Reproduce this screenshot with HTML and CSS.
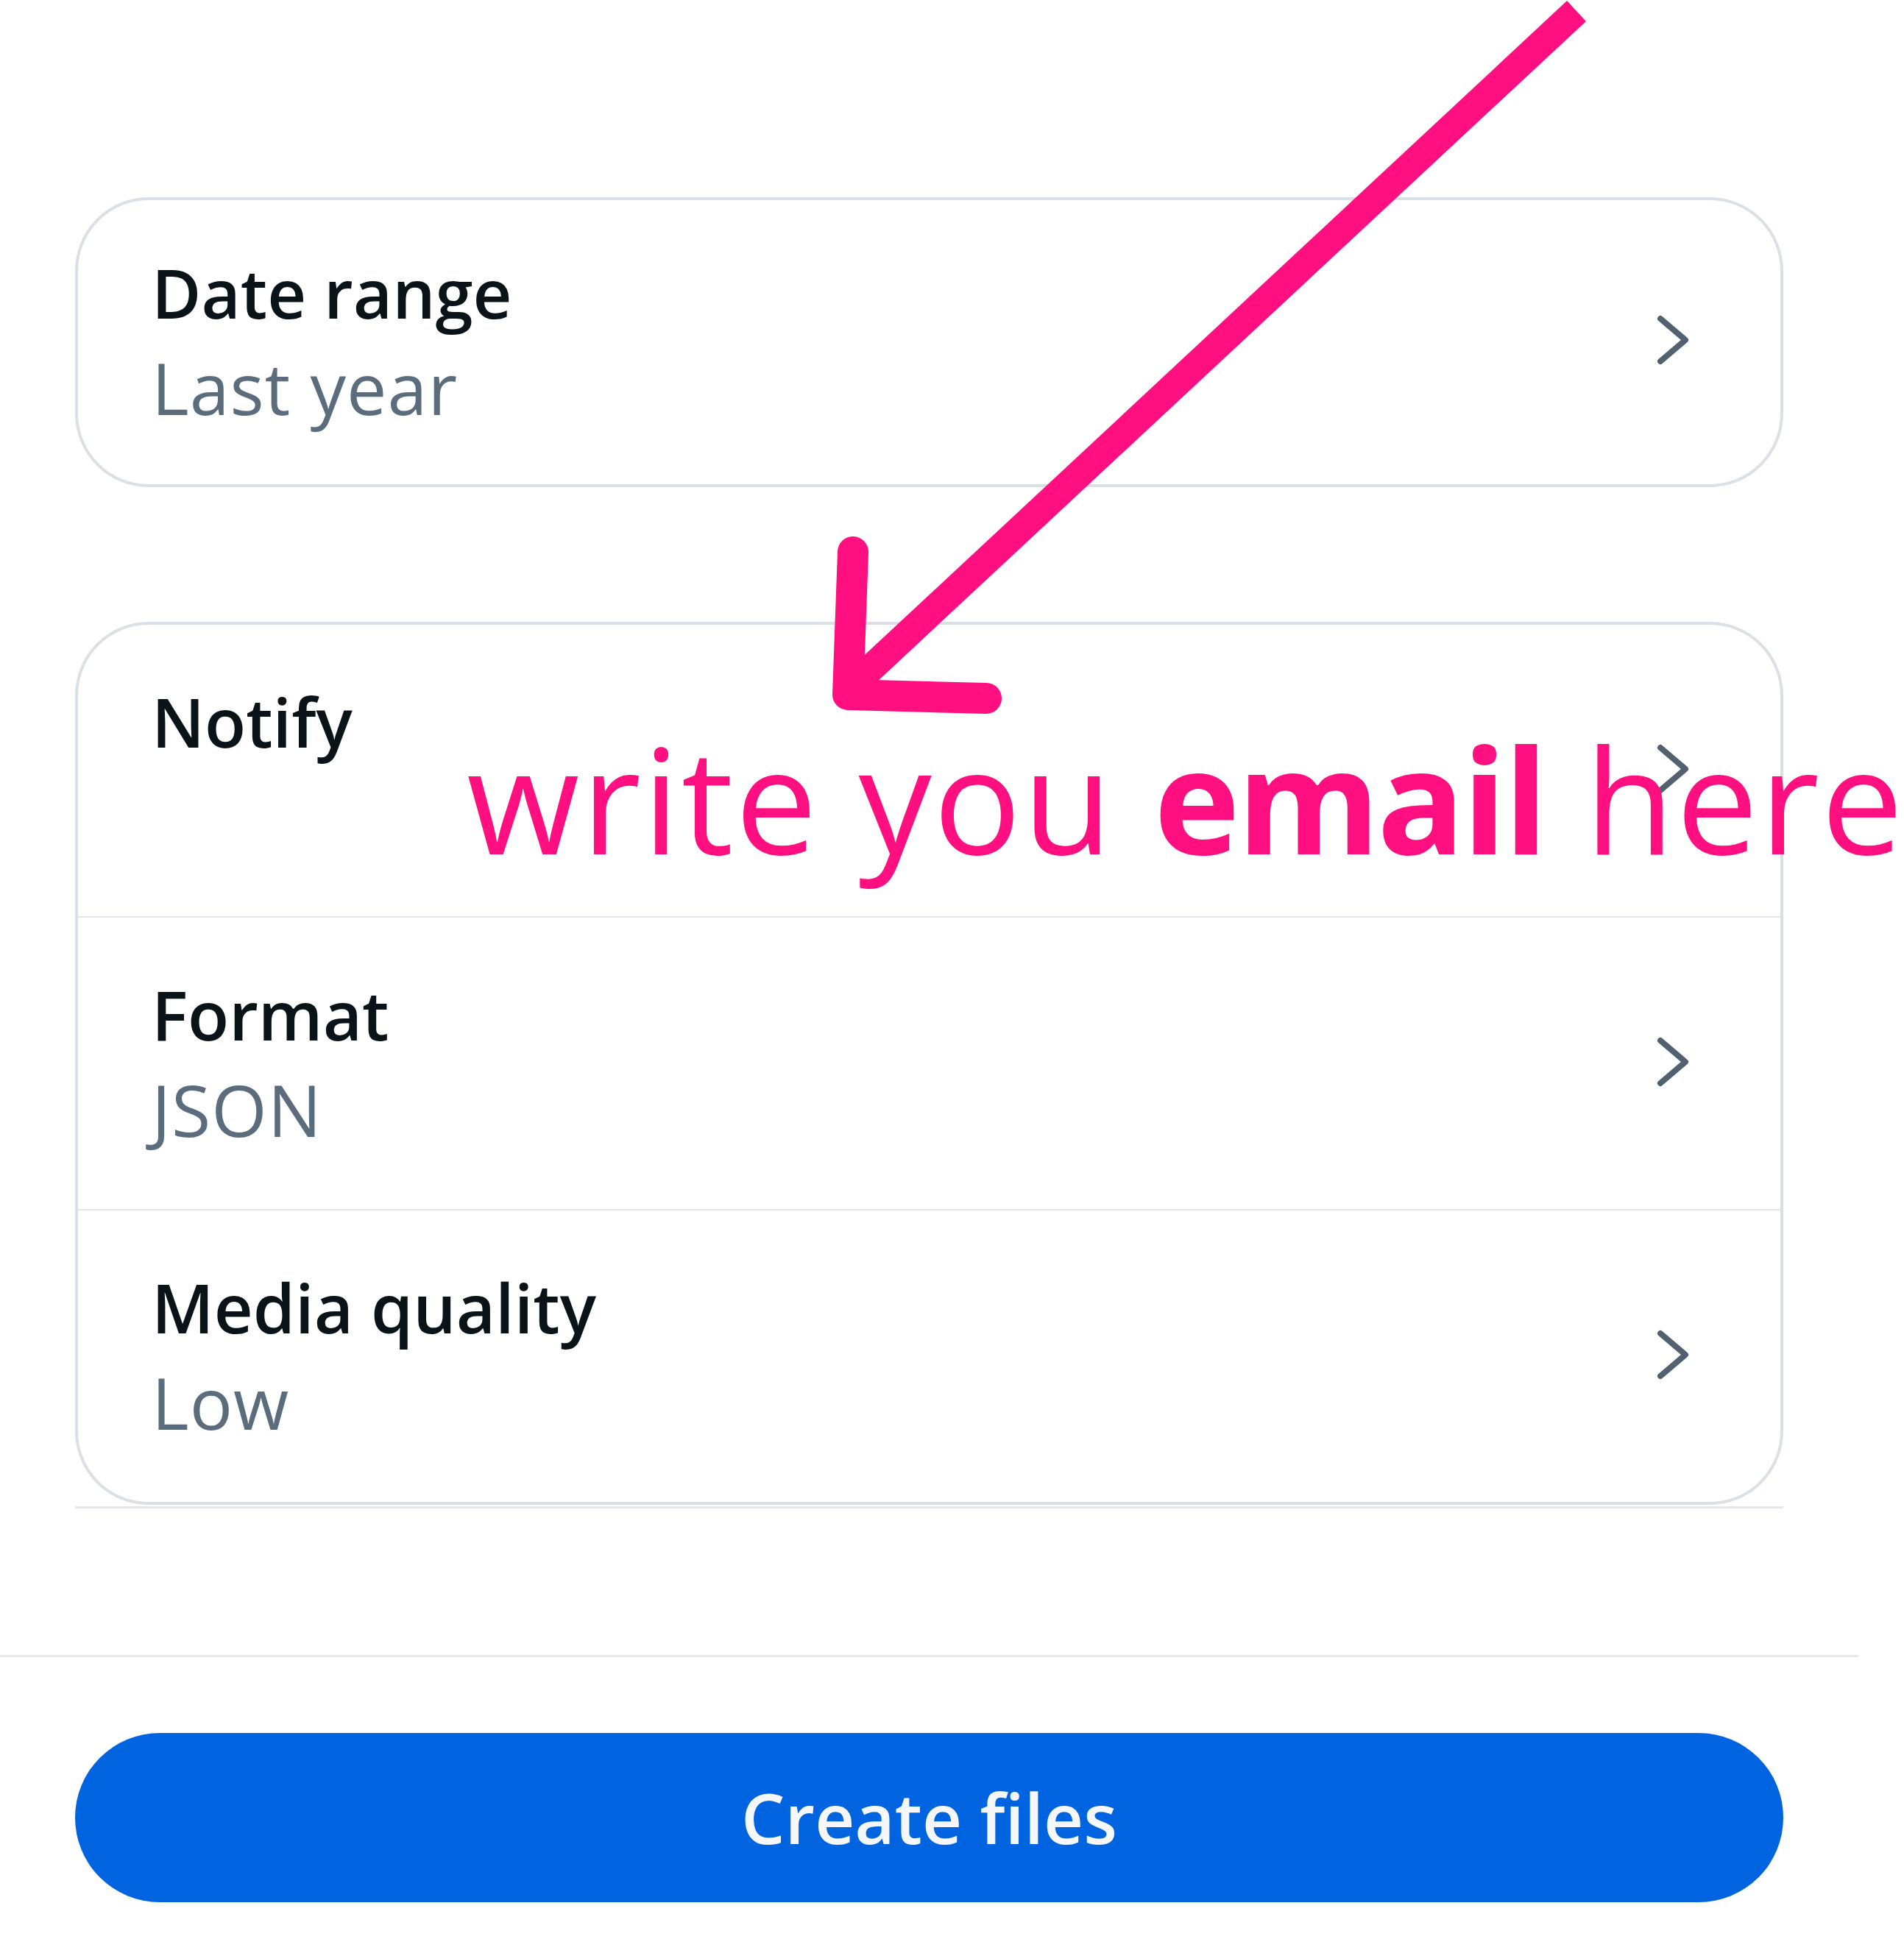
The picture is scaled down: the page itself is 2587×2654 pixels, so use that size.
FILE: index.html
```html
<!DOCTYPE html>
<html lang="en">
<head>
<meta charset="utf-8">
<title>Create files</title>
<link rel="stylesheet" href="styles.css">
</head>
<body>
<main class="screen">
  <div class="settings">
    <section class="card card--single">
      <div class="row row--single">
        <div class="row-text">
          <div class="row-title">Date range</div>
          <div class="row-value">Last year</div>
        </div>
        <svg class="chev" viewBox="0 0 48 72" aria-hidden="true"><path d="M7 7 L41 36 L7 65"/></svg>
      </div>
    </section>

    <section class="card card--list">
      <div class="row">
        <div class="row-text">
          <div class="row-title">Notify</div>
          <div class="row-value">&nbsp;</div>
        </div>
        <svg class="chev" viewBox="0 0 48 72" aria-hidden="true"><path d="M7 7 L41 36 L7 65"/></svg>
      </div>
      <div class="row">
        <div class="row-text">
          <div class="row-title">Format</div>
          <div class="row-value">JSON</div>
        </div>
        <svg class="chev" viewBox="0 0 48 72" aria-hidden="true"><path d="M7 7 L41 36 L7 65"/></svg>
      </div>
      <div class="row">
        <div class="row-text">
          <div class="row-title">Media quality</div>
          <div class="row-value">Low</div>
        </div>
        <svg class="chev" viewBox="0 0 48 72" aria-hidden="true"><path d="M7 7 L41 36 L7 65"/></svg>
      </div>
    </section>
    <div class="list-rule"></div>
  </div>

  <footer class="footer">
    <button class="primary-btn" type="button">Create files</button>
  </footer>
</main>

<svg class="annot-arrow" viewBox="0 0 2587 2654" aria-hidden="true">
  <path class="annot-shaft" d="M2142 15 L1162 928"/>
  <path class="annot-head" d="M1159 750 L1152 944 L1340 949"/>
</svg>
<div class="annot-text">write you <b>email</b> here</div>
</body>
</html>
```

FILE: styles.css
```css
* {
  box-sizing: border-box;
}

html, body {
  margin: 0;
  padding: 0;
  background: #ffffff;
}

body {
  position: relative;
  width: 2587px;
  min-height: 2654px;
  font-family: "Open Sans", "Noto Sans", "Liberation Sans", sans-serif;
  overflow: hidden;
}

.screen {
  width: 2525px;
}

.settings {
  padding: 268px 102px 199px;
}

.card {
  border: 4px solid #dbe0e6;
  border-radius: 100px;
  background: #ffffff;
}

.card--single {
  margin-bottom: 183px;
}

.row {
  display: flex;
  align-items: center;
  justify-content: space-between;
  padding: 68px 122px 72px 100px;
}

.row--single {
  padding: 62px 122px 68px 100px;
}

.card--list .row + .row {
  border-top: 2px solid #e3e7eb;
}

.row-text {
  display: flex;
  flex-direction: column;
}

.row-title {
  font-size: 92px;
  line-height: 128px;
  font-weight: 600;
  color: #0a1317;
  white-space: nowrap;
}

.row-value {
  font-size: 97px;
  line-height: 128px;
  font-weight: 400;
  letter-spacing: 1px;
  color: #5b6c7d;
  white-space: nowrap;
}

.chev {
  width: 48px;
  height: 72px;
  flex: none;
}

.chev path {
  fill: none;
  stroke: #516170;
  stroke-width: 8;
  stroke-linecap: round;
  stroke-linejoin: round;
}

.list-rule {
  height: 3px;
  margin-top: 2px;
  background: #e3e7ec;
}

.footer {
  border-top: 3px solid #e5e8ec;
  padding: 103px 102px 0;
}

.primary-btn {
  display: block;
  width: 100%;
  height: 230px;
  border: none;
  border-radius: 115px;
  background: #0064e0;
  color: #f5f7fa;
  font-family: "Open Sans", "Noto Sans", "Liberation Sans", sans-serif;
  font-size: 94px;
  font-weight: 600;
  line-height: 1;
  padding: 0;
}

.annot-arrow {
  position: absolute;
  left: 0;
  top: 0;
  width: 2587px;
  height: 2654px;
  pointer-events: none;
}

.annot-shaft {
  fill: none;
  stroke: #ff0f80;
  stroke-width: 38;
  stroke-linecap: butt;
}

.annot-head {
  fill: none;
  stroke: #ff0f80;
  stroke-width: 42;
  stroke-linecap: round;
  stroke-linejoin: round;
}

.annot-text {
  position: absolute;
  left: 634px;
  top: 985px;
  font-family: "Open Sans", "Noto Sans", sans-serif;
  font-size: 198px;
  line-height: 198px;
  font-weight: 400;
  letter-spacing: 2.5px;
  color: #ff0f80;
  white-space: nowrap;
  pointer-events: none;
}

.annot-text b {
  font-weight: 700;
  letter-spacing: -4px;
}
```
